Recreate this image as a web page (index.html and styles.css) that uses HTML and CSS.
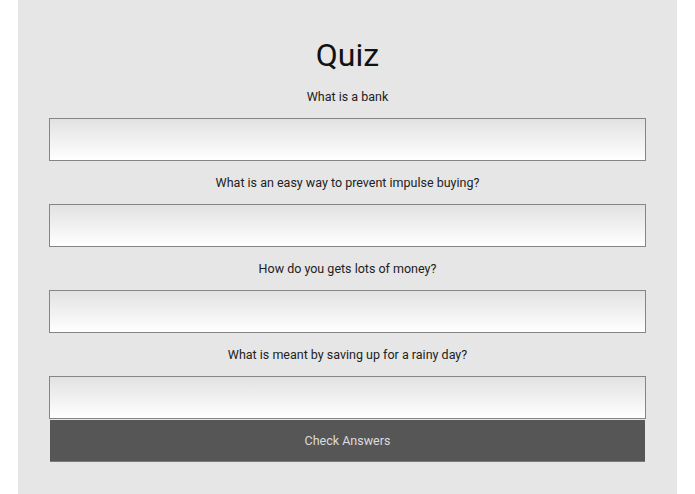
FILE: index.html
```html
<!DOCTYPE html>
<html>
<head>
<meta charset="utf-8">
<link rel="stylesheet" href="styles.css">
</head>
<body>
<div class="panel">
  <h1 class="title">Quiz</h1>
  <div class="question">What is a bank</div>
  <input class="answer" type="text">
  <div class="question">What is an easy way to prevent impulse buying?</div>
  <input class="answer" type="text">
  <div class="question">How do you gets lots of money?</div>
  <input class="answer" type="text">
  <div class="question">What is meant by saving up for a rainy day?</div>
  <input class="answer" type="text">
  <button class="check">Check Answers</button>
</div>
</body>
</html>
```
FILE: styles.css
```css
html, body {
  margin: 0;
  padding: 0;
  background: #ffffff;
  font-family: Roboto, "Liberation Sans", sans-serif;
}
.panel {
  margin-left: 18px;
  width: 659px;
  min-height: 494px;
  box-sizing: border-box;
  background: #e6e6e6;
  padding: 36px 30px 0 30px;
  display: flex;
  flex-direction: column;
  align-items: center;
}
.title {
  margin: 0;
  font-size: 32px;
  font-weight: 400;
  line-height: 39px;
  color: #111;
}
.question {
  font-size: 12.5px;
  line-height: 15px;
  padding: 14px 0;
  color: #222;
  text-align: center;
}
.answer {
  display: block;
  width: 597px;
  height: 43px;
  box-sizing: border-box;
  margin: 0;
  border: 1px solid #858585;
  background: linear-gradient(to bottom, #e2e2e2 0%, #f3f3f3 60%, #ffffff 100%);
  outline: none;
}
.check {
  display: block;
  width: 595px;
  height: 42px;
  margin: 1px 0 0 0;
  box-sizing: border-box;
  border: none;
  border-bottom: 1px solid #7a7a7a;
  background: #565656;
  color: #dcdcdc;
  font-family: Roboto, "Liberation Sans", sans-serif;
  font-size: 12.5px;
}
```
